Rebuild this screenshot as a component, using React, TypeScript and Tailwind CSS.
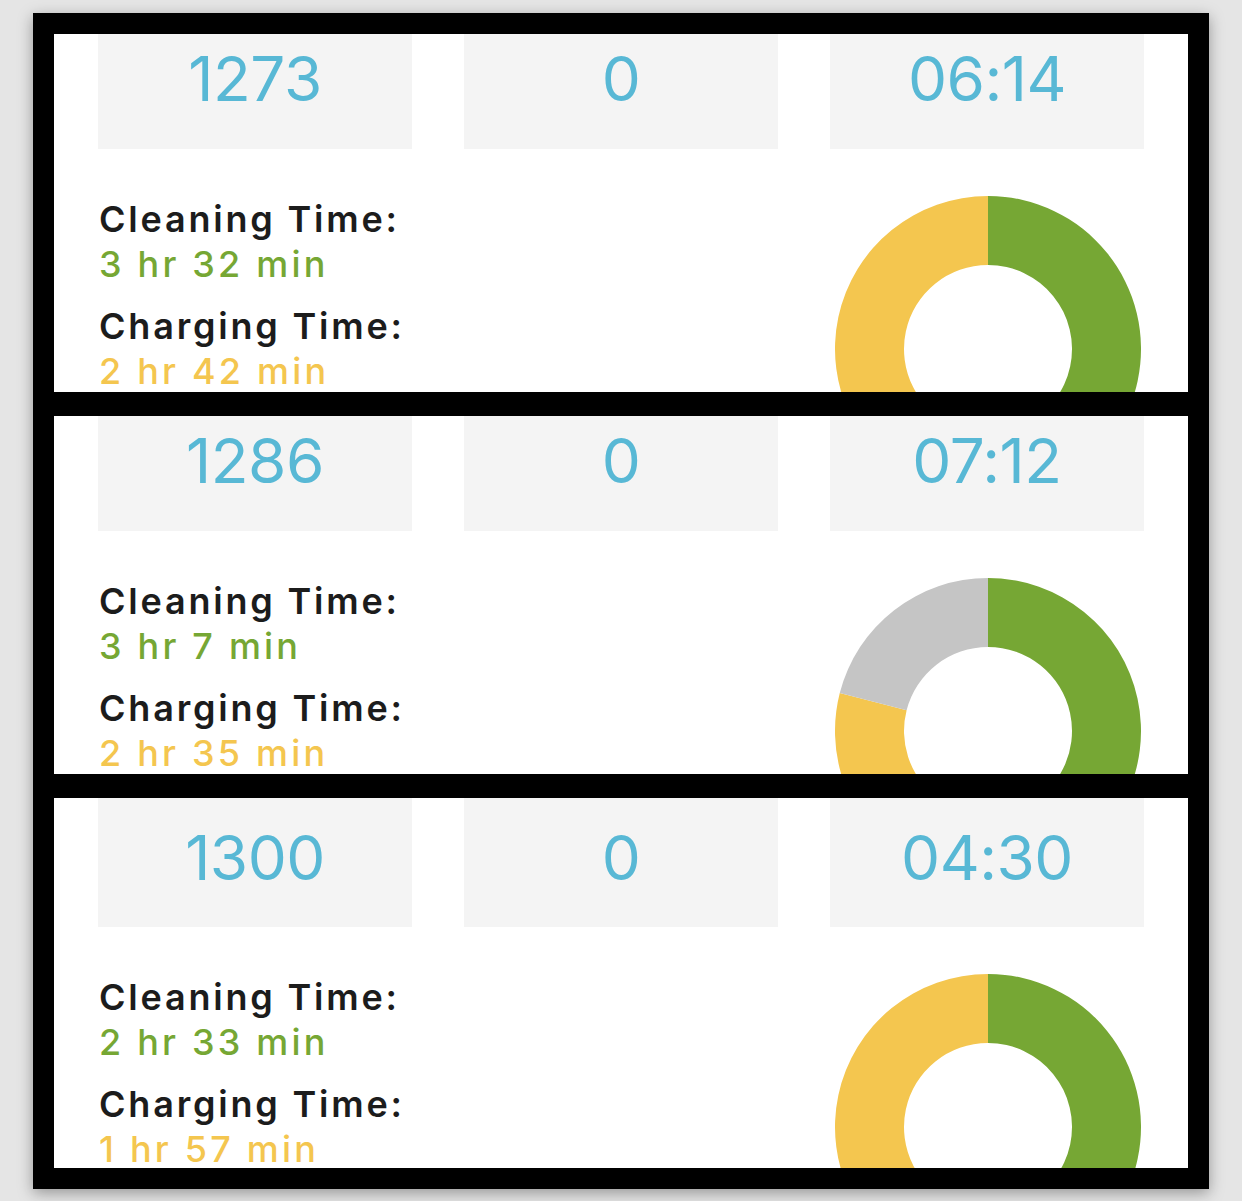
// Cleaning stats — three stacked crops of the robot summary screen
type Stat = {
  area: string
  errors: string
  duration: string
  cleaning: string
  charging: string
  // donut slices, fractions of the full circle, drawn clockwise from 12 o'clock
  slices: { color: string; frac: number }[]
  tall?: boolean
}

const GREEN = '#76a734'
const YELLOW = '#f4c64f'
const GRAY = '#c5c5c5'

const stats: Stat[] = [
  {
    area: '1273',
    errors: '0',
    duration: '06:14',
    cleaning: '3 hr 32 min',
    charging: '2 hr 42 min',
    slices: [
      { color: GREEN, frac: 212 / 374 },
      { color: YELLOW, frac: 162 / 374 },
    ],
  },
  {
    area: '1286',
    errors: '0',
    duration: '07:12',
    cleaning: '3 hr 7 min',
    charging: '2 hr 35 min',
    slices: [
      { color: GREEN, frac: 187 / 433 },
      { color: YELLOW, frac: 155 / 433 },
      { color: GRAY, frac: 91 / 433 },
    ],
  },
  {
    area: '1300',
    errors: '0',
    duration: '04:30',
    cleaning: '2 hr 33 min',
    charging: '1 hr 57 min',
    slices: [
      { color: GREEN, frac: 153 / 270 },
      { color: YELLOW, frac: 117 / 270 },
    ],
    tall: true,
  },
]

function arcPath(start: number, end: number, r: number, ri: number, c: number) {
  const pt = (a: number, rad: number) => {
    const t = a * Math.PI * 2 - Math.PI / 2
    return `${c + rad * Math.cos(t)} ${c + rad * Math.sin(t)}`
  }
  const large = end - start > 0.5 ? 1 : 0
  return [
    `M ${pt(start, r)}`,
    `A ${r} ${r} 0 ${large} 1 ${pt(end, r)}`,
    `L ${pt(end, ri)}`,
    `A ${ri} ${ri} 0 ${large} 0 ${pt(start, ri)}`,
    'Z',
  ].join(' ')
}

function Donut({ slices }: { slices: Stat['slices'] }) {
  let acc = 0
  return (
    <svg width="306" height="306" viewBox="0 0 306 306" className="shrink-0">
      {slices.map((s, i) => {
        const d = arcPath(acc, acc + s.frac, 153, 84, 153)
        acc += s.frac
        return <path key={i} d={d} fill={s.color} />
      })}
    </svg>
  )
}

function Panel({ s }: { s: Stat }) {
  const box = s.tall
    ? 'h-[129px] pt-[29px] bg-[#f4f4f4] flex justify-center'
    : 'h-[115px] pt-[14px] bg-[#f4f4f4] flex justify-center'
  return (
    <div className={`bg-white overflow-hidden ${s.tall ? 'h-[370px]' : 'h-[358px]'}`}>
      <div className="grid grid-cols-3 gap-[52px] px-[44px]">
        {[s.area, s.errors, s.duration].map((v, i) => (
          <div key={i} className={box}>
            <span className="text-[62px] leading-[62px] text-[#58b8d5] tracking-[-0.5px]">{v}</span>
          </div>
        ))}
      </div>
      <div className="flex justify-between items-start pl-[45px] pr-[47px] mt-[47px]">
        <div className="pt-[1px]">
          <div className="text-[36px] leading-[45px] font-semibold tracking-[2.8px] text-[#1c1c1c]">
            Cleaning Time:
          </div>
          <div className="text-[36px] leading-[45px] font-medium tracking-[3.2px]" style={{ color: GREEN }}>
            {s.cleaning}
          </div>
          <div className="text-[36px] leading-[45px] font-semibold tracking-[2.8px] text-[#1c1c1c] mt-[17px]">
            Charging Time:
          </div>
          <div className="text-[36px] leading-[45px] font-medium tracking-[3.2px] text-[#f4c64f]">
            {s.charging}
          </div>
        </div>
        <Donut slices={s.slices} />
      </div>
    </div>
  )
}

export default function App() {
  return (
    <div
      className="w-[1242px] h-[1201px] bg-[#e5e5e5] pt-[13px] pl-[33px]"
      style={{ fontFamily: 'Inter, "Liberation Sans", sans-serif' }}
    >
      <div className="w-[1176px] bg-black p-[21px] flex flex-col gap-[24px] shadow-[0_4px_14px_rgba(0,0,0,0.35)]">
        {stats.map((s) => (
          <Panel key={s.area} s={s} />
        ))}
      </div>
    </div>
  )
}
